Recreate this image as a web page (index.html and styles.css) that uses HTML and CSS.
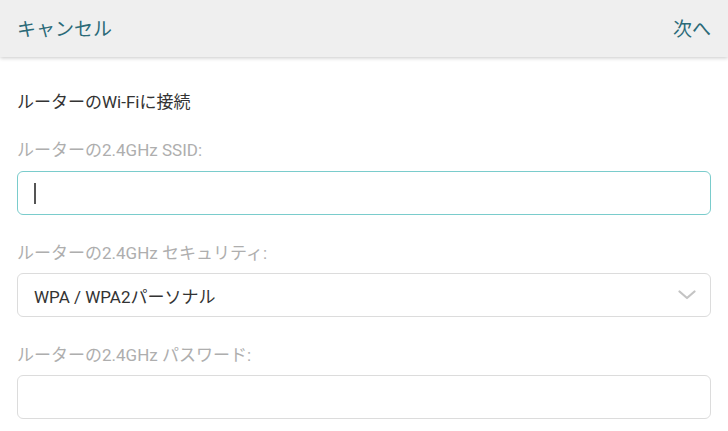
FILE: index.html
```html
<!DOCTYPE html>
<html lang="ja">
<head>
<meta charset="utf-8">
<link rel="stylesheet" href="styles.css">
</head>
<body>
<header class="bar">
  <span class="bar-btn">キャンセル</span>
  <span class="bar-btn">次へ</span>
</header>
<main class="form">
  <h1 class="title">ルーターのWi-Fiに接続</h1>
  <div class="field">
    <label class="label">ルーターの2.4GHz SSID:</label>
    <div class="box box-focus"><span class="caret"></span></div>
  </div>
  <div class="field">
    <label class="label">ルーターの2.4GHz セキュリティ:</label>
    <div class="box box-select">
      <span class="value">WPA / WPA2パーソナル</span>
      <svg class="chev" width="18" height="10" viewBox="0 0 18 10"><path d="M1.5 1.5 L9 8 L16.5 1.5" fill="none" stroke="#c4c4c4" stroke-width="2.2" stroke-linecap="round" stroke-linejoin="round"/></svg>
    </div>
  </div>
  <div class="field">
    <label class="label">ルーターの2.4GHz パスワード:</label>
    <div class="box"></div>
  </div>
</main>
</body>
</html>
```
FILE: styles.css
```css
* { box-sizing: border-box; }
html, body { margin: 0; padding: 0; background: #fff; }
body {
  font-family: Roboto, "Noto Sans CJK JP", sans-serif;
  width: 728px;
  height: 431px;
  overflow: hidden;
}
.bar {
  height: 57px;
  background: #efefef;
  display: flex;
  justify-content: space-between;
  align-items: center;
  padding: 0 17px 0 17px;
  box-shadow: 0 1px 4px rgba(0,0,0,0.22);
  position: relative;
}
.bar-btn {
  color: #2b6a78;
  font-size: 19px;
  padding-bottom: 3px;
}
.form {
  padding: 0 17px;
}
.title {
  margin: 34px 0 0 0;
  font-size: 17px;
  font-weight: 400;
  color: #333;
  line-height: 22px;
}
.field {
  display: flex;
  flex-direction: column;
}
.label {
  margin-top: 26px;
  font-size: 17px;
  color: #aeaeae;
  line-height: 22px;
  margin-bottom: 10px;
}
.field + .field .label { margin-top: 27px; margin-bottom: 9px; }
.box {
  height: 44px;
  border: 1px solid #dcdcdc;
  border-radius: 6px;
  display: flex;
  align-items: center;
  padding: 0 16px;
}
.box-focus { border: 1.5px solid #7acccc; }
.caret {
  width: 2px;
  height: 21px;
  background: #555;
}
.box-select { justify-content: space-between; padding-right: 14px; }
.value { font-size: 17px; color: #333; }
```
